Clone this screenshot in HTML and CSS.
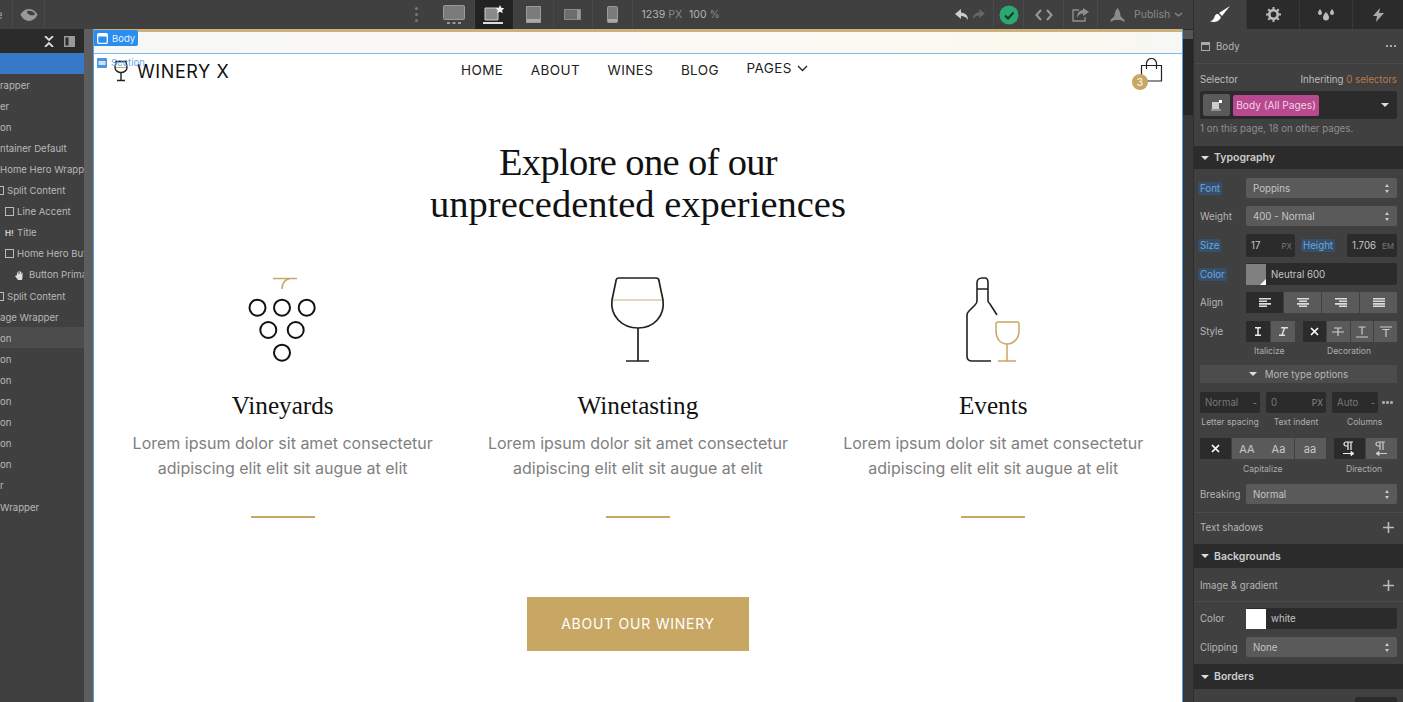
FILE: index.html
```html
<!DOCTYPE html>
<html lang="en">
<head>
<meta charset="utf-8">
<title>Designer</title>
<link rel="stylesheet" href="styles.css">
</head>
<body>
<div class="app">
  <header class="topbar">
    <div class="tool t-e"><span class="cut">e</span></div>
    <div class="tool t-eye"><svg width="18" height="14" viewBox="0 0 18 14"><path d="M9 1C4.500 1 1.500 4.500 .5 6.500 1.500 9 4.500 13 9 13s7.500-4 8.500-6.500C16.500 4.500 13.500 1 9 1z" fill="#999"/><path d="M7 3a5 4 0 0 0 8 3.500A6 5 0 0 0 7 3z" fill="#404040"/></svg></div>
    <div class="tool t-dots"><i></i><i></i><i></i></div>
    <div class="tool t-dev"><svg width="22" height="20" viewBox="0 0 22 20"><rect x=".5" y=".5" width="21" height="14" rx="1" fill="#7b7b7b" stroke="#999"/><path d="M4 18h3M9.500 18h3M15 18h3" stroke="#999" stroke-width="2"/></svg></div>
    <div class="tool t-dev active"><svg width="24" height="20" viewBox="0 0 24 20"><path d="M3 3h13v12H3z" fill="#8a8a8a" stroke="#ccc"/><path d="M1 17h20v2H1z" fill="#ddd"/><path d="M18 0l1.300 2.800 3 .4-2.200 2 .6 3-2.700-1.500-2.700 1.500.6-3-2.200-2 3-.4z" fill="#eee"/></svg></div>
    <div class="tool t-dev"><svg width="15" height="17" viewBox="0 0 15 17"><rect x=".5" y=".5" width="14" height="16" fill="#7b7b7b" stroke="#999"/><path d="M1 13h13v3H1z" fill="#aaa"/></svg></div>
    <div class="tool t-dev"><svg width="17" height="11" viewBox="0 0 17 11"><rect x=".5" y=".5" width="16" height="10" fill="#6d6d6d" stroke="#8a8a8a"/><path d="M13 1h3v9h-3z" fill="#999"/></svg></div>
    <div class="tool t-dev"><svg width="11" height="17" viewBox="0 0 11 17"><rect x=".5" y=".5" width="10" height="16" rx="1" fill="#7b7b7b" stroke="#999"/><path d="M1 13h9v3H1z" fill="#aaa"/></svg></div>
    <div class="tool t-size"><span class="lt">1239</span><span class="dm">PX</span><span class="lt gapl">100</span><span class="dm">%</span></div>
    <div class="grow"></div>
    <div class="tool t-undo">
      <svg width="14" height="12" viewBox="0 0 14 12"><path d="M6 0L0 5l6 5V7c3 0 5 1 7 4 0-5-3-7-7-7.500z" fill="#ccc"/></svg>
      <svg width="13" height="11" viewBox="0 0 14 12"><path d="M8 0l6 5-6 5V7c-3 0-5 1-7 4 0-5 3-7 7-7.500z" fill="#666"/></svg>
    </div>
    <div class="tool t-check"><svg width="20" height="20" viewBox="0 0 20 20"><circle cx="10" cy="10" r="9.500" fill="#2da771"/><path d="M6 10.500l3 3 5.500-6" fill="none" stroke="#16382a" stroke-width="2"/></svg></div>
    <div class="tool t-code"><svg width="18" height="12" viewBox="0 0 18 12"><path d="M6 1L1.500 6 6 11M12 1l4.500 5L12 11" fill="none" stroke="#999" stroke-width="2"/></svg></div>
    <div class="tool t-export"><svg width="17" height="14" viewBox="0 0 17 14"><path d="M7 2H1v11h12V9" fill="none" stroke="#8f8f8f" stroke-width="1.400"/><path d="M11 0l6 4-6 4V5.500C8 5.500 6 7 5 10c0-5 2-7.500 6-8z" fill="#8f8f8f"/></svg></div>
    <div class="tool t-publish"><svg width="15" height="14" viewBox="0 0 15 14"><path d="M7.500 0c2 2 3 5 3 8l4 4v2l-4-2h-6l-4 2v-2l4-4c0-3 1-6 3-8z" fill="#8a8a8a"/></svg><span>Publish</span><svg class="pub-chev" width="9" height="6" viewBox="0 0 9 6"><path d="M1 1l3.500 3L8 1" fill="none" stroke="#8a8a8a" stroke-width="1.300"/></svg></div>
  </header>

  <aside class="nav-tree">
    <div class="tree-head">
      <svg width="10" height="11" viewBox="0 0 10 11"><path d="M1 0l4 4 4-4M1 11l4-4 4 4" fill="none" stroke="#ddd" stroke-width="1.800"/></svg>
      <svg width="11" height="11" viewBox="0 0 11 11"><rect width="11" height="11" fill="#999"/><rect x="1.500" y="1.500" width="3" height="8" fill="#2b2b2b"/></svg>
    </div>
    <div class="tree-row selected"></div>
    <div class="tree-row">rapper</div>
    <div class="tree-row">er</div>
    <div class="tree-row">on</div>
    <div class="tree-row">ntainer Default</div>
    <div class="tree-row">Home Hero Wrapper</div>
    <div class="tree-row in-1"><i class="box cutbox"></i>Split Content</div>
    <div class="tree-row in-2"><i class="box"></i>Line Accent</div>
    <div class="tree-row in-2"><b class="hh">H!</b>Title</div>
    <div class="tree-row in-2"><i class="box"></i>Home Hero Button</div>
    <div class="tree-row in-3"><svg class="hand" width="10" height="10" viewBox="0 0 10 10"><path d="M2 5V2.500h1V4h.5V1h1v3H5V1.500h1V4h.500V2.500h1V7L7 10H3L0 6l1-.5z" fill="#ddd"/></svg>Button Primary</div>
    <div class="tree-row in-1"><i class="box cutbox"></i>Split Content</div>
    <div class="tree-row">age Wrapper</div>
    <div class="tree-row hover">on</div>
    <div class="tree-row">on</div>
    <div class="tree-row">on</div>
    <div class="tree-row">on</div>
    <div class="tree-row">on</div>
    <div class="tree-row">on</div>
    <div class="tree-row">on</div>
    <div class="tree-row">r</div>
    <div class="tree-row">Wrapper</div>
  </aside>

  <div class="gutter"></div>

  <main class="canvas">
    <div class="tag tag-body"><svg width="11" height="11" viewBox="0 0 11 11"><rect x=".7" y=".7" width="9.600" height="9.600" rx="1" fill="none" stroke="#fff" stroke-width="1.300"/><path d="M1 1h9v2.500H1z" fill="#fff"/></svg>Body</div>
    <div class="tag-section"><svg width="10" height="10" viewBox="0 0 10 10"><rect width="10" height="10" rx="1" fill="#4a94e0"/><path d="M1.500 3h7v4h-7z" fill="#cfe3f7"/></svg>Section</div>
    <div class="strip"></div>
    <div class="page">
      <nav class="site-nav">
        <div class="logo">
          <svg width="16" height="22" viewBox="0 0 16 22"><path d="M3 7.500h10" stroke="#c8a765" stroke-width="1"/><path d="M3 1.500h10l1 6c0 3-3 5-6 5s-6-2-6-5z" fill="none" stroke="#222" stroke-width="1.400"/><path d="M8 12.500V20.500M4 20.500h8" stroke="#222" stroke-width="1.400"/></svg>
          <span>WINERY X</span>
        </div>
        <ul class="menu">
          <li>HOME</li><li>ABOUT</li><li>WINES</li><li>BLOG</li>
          <li class="pages">PAGES<svg width="11" height="7" viewBox="0 0 11 7"><path d="M1 1l4.500 4.500L10 1" fill="none" stroke="#222" stroke-width="1.300"/></svg></li>
        </ul>
        <div class="cart">
          <svg width="23" height="25" viewBox="0 0 23 25"><path d="M1.500 7.500h20v15.500h-20z" fill="none" stroke="#222" stroke-width="1.200"/><path d="M6.500 11V5.500a5 5 0 0 1 10 0V11" fill="none" stroke="#222" stroke-width="1.200"/></svg>
          <span class="badge">3</span>
        </div>
      </nav>
      <h1><span class="tight">Explore one of our</span><br>unprecedented experiences</h1>
      <section class="cols">
        <article class="col">
          <svg class="pic" width="70" height="85" viewBox="0 0 70 85"><path d="M25 1.500h24M42 1.500c-5 1-8 5-8 10.500" fill="none" stroke="#c8a765" stroke-width="1.600"/><g fill="none" stroke="#111" stroke-width="2"><circle cx="9.500" cy="30.700" r="8"/><circle cx="34" cy="30.700" r="8"/><circle cx="58.700" cy="30.700" r="8"/><circle cx="20.300" cy="53" r="8"/><circle cx="47.700" cy="53" r="8"/><circle cx="34" cy="75.700" r="8"/></g></svg>
          <h2>Vineyards</h2>
          <p>Lorem ipsum dolor sit amet consectetur adipiscing elit elit sit augue at elit</p>
          <hr>
        </article>
        <article class="col">
          <svg class="pic" width="70" height="85" viewBox="0 0 70 85"><path d="M10 23h49" stroke="#d8c9a5" stroke-width="1.600"/><path d="M13 4c0-2 1-3 3-3h37c2 0 3 1 3 3l4 19c2 16-9 28-25 28S7 39 9 23z" fill="none" stroke="#222" stroke-width="1.700"/><path d="M35 51v33M23 84h23" fill="none" stroke="#222" stroke-width="1.700"/></svg>
          <h2>Winetasting</h2>
          <p>Lorem ipsum dolor sit amet consectetur adipiscing elit elit sit augue at elit</p>
          <hr>
        </article>
        <article class="col">
          <svg class="pic" width="70" height="85" viewBox="0 0 70 85"><path d="M33 84H14c-3 0-5-2-5-5V38c0-2 1-3 2-4l6-6c1-1 2-2 2-4V6c0-3 2-5 5-5h3c2 0 3 2 3 5v18c0 1 1 2 2 3l7 11M19 12h11" fill="none" stroke="#222" stroke-width="1.600"/><path d="M40 45h19c1 0 2 1 2 2v7c0 7-5 13-12 13s-11-6-11-13v-7c0-1 1-2 2-2zM49 67v17M40 84h18" fill="none" stroke="#c8a765" stroke-width="1.500"/></svg>
          <h2>Events</h2>
          <p>Lorem ipsum dolor sit amet consectetur adipiscing elit elit sit augue at elit</p>
          <hr>
        </article>
      </section>
      <a class="cta">ABOUT OUR WINERY</a>
    </div>
  </main>

  <div class="scroll"><i class="arrow"></i><i class="track"></i><i class="thumb"></i></div>

  <aside class="panel">
    <div class="tabs">
      <div class="tab on"><svg width="21" height="17" viewBox="0 0 21 17"><path d="M20 0L9 7l3 3zM8 8c-3 0-3 2-4 4-1 2-2 3-4 3 3 2 8 1 10-2 1-1 1-2 0-3z" fill="#fff"/></svg></div>
      <div class="tab"><svg width="15" height="15" viewBox="0 0 15 15"><circle cx="7.500" cy="7.500" r="4.200" fill="none" stroke="#bbb" stroke-width="2.600"/><path d="M7.500 0v15M0 7.500h15M2.200 2.200l10.600 10.600M12.800 2.200L2.200 12.800" stroke="#bbb" stroke-width="2" stroke-dasharray="3 9 3 0"/></svg></div>
      <div class="tab"><svg width="18" height="13" viewBox="0 0 18 13"><path d="M3 1c1.500 2 2 3 2 4a2 2 0 0 1-4 0c0-1 .5-2 2-4zM15 1c1.500 2 2 3 2 4a2 2 0 0 1-4 0c0-1 .5-2 2-4zM9 4c2 2 3 4 3 5.500a3 3 0 0 1-6 0C6 8 7 6 9 4z" fill="#bbb"/></svg></div>
      <div class="tab"><svg width="11" height="14" viewBox="0 0 11 14"><path d="M7 0L0 8h4l-1 6 8-9H6z" fill="#aaa"/></svg></div>
    </div>

    <div class="p-head"><svg width="9" height="9" viewBox="0 0 9 9"><rect x=".5" y=".5" width="8" height="8" fill="none" stroke="#aaa"/><path d="M1 1h7v2H1z" fill="#aaa"/></svg><span class="grow">Body</span><span class="more"><i></i><i></i><i></i></span></div>

    <div class="p-sel">
      <div class="sel-top"><span>Selector</span><span>Inheriting <em>0 selectors</em></span></div>
      <div class="sel-box">
        <span class="sel-ico"><svg width="11" height="11" viewBox="0 0 11 11"><path d="M1 2h7v7H1zM0 9.500h10v1H0z" fill="#ccc"/><rect x="8" y="0" width="3" height="3" fill="#fff"/></svg></span>
        <span class="pill">Body (All Pages)</span>
        <span class="grow"></span>
        <i class="caret"></i>
      </div>
      <div class="sel-note">1 on this page, 18 on other pages.</div>
    </div>

    <h3 class="sec sec-typo"><i class="caret small"></i>Typography</h3>
    <div class="form">
      <div class="row r-font"><label><span class="hl">Font</span></label><div class="select">Poppins<i class="updown"></i></div></div>
      <div class="row r-weight"><label>Weight</label><div class="select">400 - Normal<i class="updown"></i></div></div>
      <div class="row r-size">
        <label><span class="hl">Size</span></label>
        <div class="input w49"><span>17</span><small>PX</small></div>
        <label class="h2l"><span class="hl">Height</span></label>
        <div class="input w49b"><span>1.706</span><small>EM</small></div>
      </div>
      <div class="row r-color"><label><span class="hl">Color</span></label><div class="color"><i class="swatch grey"></i>Neutral 600</div></div>
      <div class="row r-align"><label>Align</label>
        <div class="seg four">
          <b class="dark"><svg width="12" height="9" viewBox="0 0 12 9"><path d="M0 .7h12M0 3.300h8M0 5.900h12M0 8.300h8" stroke="#ddd" stroke-width="1.600"/></svg></b>
          <b><svg width="12" height="9" viewBox="0 0 12 9"><path d="M0 .7h12M2 3.300h8M0 5.900h12M2 8.300h8" stroke="#ddd" stroke-width="1.600"/></svg></b>
          <b><svg width="12" height="9" viewBox="0 0 12 9"><path d="M0 .7h12M4 3.300h8M0 5.900h12M4 8.300h8" stroke="#ddd" stroke-width="1.600"/></svg></b>
          <b><svg width="12" height="9" viewBox="0 0 12 9"><path d="M0 .7h12M0 3.300h12M0 5.900h12M0 8.300h12" stroke="#ddd" stroke-width="1.600"/></svg></b>
        </div>
      </div>
      <div class="row r-style"><label>Style</label>
        <div class="seg two">
          <b class="dark"><svg width="8" height="9" viewBox="0 0 8 9"><path d="M1 .8h6M1 8.200h6M4 1v7" stroke="#eee" stroke-width="1.500"/></svg></b>
          <b><svg width="9" height="9" viewBox="0 0 9 9"><path d="M2 .8h7M0 8.200h6M5.500 1L3 8" stroke="#ddd" stroke-width="1.500"/></svg></b>
        </div>
        <div class="seg deco">
          <b class="dark"><svg width="9" height="9" viewBox="0 0 9 9"><path d="M1 1l7 7M8 1L1 8" stroke="#fff" stroke-width="1.700"/></svg></b>
          <b><svg width="12" height="10" viewBox="0 0 12 10"><path d="M2 1h8M6 1v8M0 5h12" stroke="#ccc" stroke-width="1.200"/></svg></b>
          <b><svg width="12" height="12" viewBox="0 0 12 12"><path d="M2.500 1h7M6 1v7.500M0 11h12" stroke="#ccc" stroke-width="1.200"/></svg></b>
          <b><svg width="12" height="12" viewBox="0 0 12 12"><path d="M0 1h12M2.500 3.500h7M6 3.500V11" stroke="#ccc" stroke-width="1.200"/></svg></b>
        </div>
      </div>
      <div class="caps c-style"><span class="c1">Italicize</span><span class="c2">Decoration</span></div>
      <div class="more-opts"><i class="caret small"></i>More type options</div>
      <div class="trio">
        <div class="cell"><div class="input ghost w60"><span>Normal</span><small>-</small></div><span class="cap">Letter spacing</span></div>
        <div class="cell"><div class="input ghost w60"><span>0</span><small>PX</small></div><span class="cap">Text indent</span></div>
        <div class="cell cell-c"><div class="columns"><div class="input ghost w46"><span>Auto</span><small>-</small></div><span class="more dim"><i></i><i></i><i></i></span></div><span class="cap">Columns</span></div>
      </div>
      <div class="row r-cap">
        <div class="seg capz">
          <b class="dark"><svg width="9" height="9" viewBox="0 0 9 9"><path d="M1 1l7 7M8 1L1 8" stroke="#fff" stroke-width="1.700"/></svg></b>
          <b>AA</b><b>Aa</b><b>aa</b>
        </div>
        <div class="seg dirn">
          <b class="dark"><svg width="12" height="15" viewBox="0 0 12 15"><path d="M5 1v8M8 1v8M3 1h7M3 1a2 2 0 0 0 0 4h2" fill="none" stroke="#eee" stroke-width="1.200"/><path d="M0 12.500h10M8 10.500l3 2-3 2z" fill="#eee" stroke="#eee"/></svg></b>
          <b><svg width="12" height="15" viewBox="0 0 12 15"><path d="M5 1v8M8 1v8M3 1h7M3 1a2 2 0 0 0 0 4h2" fill="none" stroke="#ccc" stroke-width="1.200"/><path d="M2 12.500h10M4 10.500l-3 2 3 2z" fill="#ccc" stroke="#ccc"/></svg></b>
        </div>
      </div>
      <div class="caps c-cap"><span class="c3">Capitalize</span><span class="c4">Direction</span></div>
      <div class="row r-break"><label>Breaking</label><div class="select">Normal<i class="updown"></i></div></div>
    </div>
    <div class="line-row shadows"><span class="grow">Text shadows</span><svg width="11" height="11" viewBox="0 0 11 11"><path d="M5.500 0v11M0 5.500h11" stroke="#bbb" stroke-width="1.600"/></svg></div>

    <h3 class="sec sec-bg"><i class="caret small"></i>Backgrounds</h3>
    <div class="line-row image"><span class="grow">Image &amp; gradient</span><svg width="11" height="11" viewBox="0 0 11 11"><path d="M5.500 0v11M0 5.500h11" stroke="#bbb" stroke-width="1.600"/></svg></div>
    <div class="form form-bg">
      <div class="row r-bgc"><label>Color</label><div class="color"><i class="swatch white"></i>white</div></div>
      <div class="row r-clip"><label>Clipping</label><div class="select">None<i class="updown"></i></div></div>
    </div>
    <h3 class="sec sec-bd"><i class="caret small"></i>Borders</h3>
    <div class="stub"></div>
  </aside>
</div>
</body>
</html>
```
FILE: styles.css
```css
* { box-sizing: border-box; }
html, body { margin: 0; padding: 0; height: 100%; overflow: hidden; background: #404040; }
body { font-family: Inter, "Liberation Sans", sans-serif; font-size: 9.700px; color: #bdbdbd; }
i, b { display: block; font-style: normal; font-weight: normal; }
.grow { flex: 1; }

.app { width: 1403px; height: 702px; overflow: hidden; display: grid; grid-template-columns: 84px 9px 1090px 10px 210px; grid-template-rows: 29px 673px; }

.topbar { grid-column: 1 / 5; grid-row: 1; display: flex; align-items: center; background: #404040; height: 29px; }
.tool { height: 29px; display: flex; align-items: center; justify-content: center; flex: none; border-right: 1px solid #4a4a4a; }
.t-e { width: 13px; justify-content: flex-start; }
.cut { color: #aaa; font-size: 11px; margin-left: -4px; }
.t-eye { width: 32px; }
.t-dots { width: 29px; flex-direction: column; gap: 3px; border-right: 0; margin-left: 361px; padding-right: 8px; }
.t-dots i { width: 3px; height: 3px; border-radius: 50%; background: #777; }
.t-dev { width: 39.500px; border-right: 1px solid #484848; }
.t-dev.active { background: #222; }
.t-size { width: 93px; justify-content: flex-start; padding-left: 9px; font-size: 10.500px; gap: 3px; border-right: 0; }
.lt { color: #b4b4b4; }
.dm { color: #8a8a8a; }
.gapl { margin-left: 4px; }
.t-undo { width: 48px; gap: 3px; }
.t-check { width: 30px; }
.t-code { width: 40px; }
.t-export { width: 34px; }
.t-publish { width: 95px; gap: 9px; border-right: 0; justify-content: flex-start; padding-left: 12px; color: #8a8a8a; font-size: 10.500px; }
.pub-chev { margin-left: -5px; }

.nav-tree { background: #404040; overflow: hidden; }
.tree-head { height: 24px; background: #2b2b2b; display: flex; align-items: center; justify-content: flex-end; gap: 10px; padding-right: 9px; }
.tree-row { height: 21.100px; padding-top: 1px; white-space: nowrap; overflow: hidden; font-size: 9.600px; color: #b8b8b8; display: flex; align-items: center; }
.selected { background: #3878c8; }
.hover { background: #4c4c4c; }
.box { width: 9px; height: 9px; border: 1px solid #bbb; margin-right: 3px; flex: none; }
.cutbox { margin-left: -5px; }
.in-2 { padding-left: 5px; }
.in-3 { padding-left: 15px; }
.hh { width: 9px; margin-right: 3px; font-size: 8px; font-weight: 700; color: #ccc; }
.hand { margin-right: 4px; flex: none; }

.gutter { background: #5e5e5e; }

.canvas { position: relative; overflow: hidden; background: #fff; border-left: 1px solid #5a9fe0; border-right: 1px solid #5a9fe0; }
.tag-body { position: absolute; left: -1px; top: 1px; width: 45px; height: 16px; background: #2a8df0; color: #e8f3fe; border-radius: 2px; display: flex; align-items: center; gap: 4px; padding-left: 4px; font-size: 9.500px; z-index: 3; }
.tag-section { position: absolute; left: 3px; top: 28px; display: flex; align-items: center; gap: 4px; color: #6aa8e6; font-size: 9.500px; z-index: 3; }
.strip { height: 25px; background: linear-gradient(90deg, #f7f7f6, #f9f8f5 30%, #fbf9f4 60%, #fbf9ee 85%, #f7f7f4); border-top: 3px solid #cdb07a; border-bottom: 1px solid #7fbbe8; }
.page { color: #111; }

.site-nav { height: 42px; display: flex; align-items: flex-start; position: relative; padding-left: 19px; }
.logo { display: flex; align-items: center; gap: 8px; height: 22px; margin-top: 6px; font-size: 18px; letter-spacing: .6px; color: #111; width: 348px; }
.logo svg { flex: none; }
.menu { display: flex; align-items: flex-start; list-style: none; margin: 7px 0 0; padding: 0; font-size: 13.500px; letter-spacing: .4px; color: #222; gap: 27.500px; font-weight: 400; }
.menu li { line-height: 18px; }
.pages { display: flex; align-items: center; gap: 5px; margin-top: -2px; }
.cart { position: absolute; left: 1046px; top: 4px; }
.badge { position: absolute; left: -8px; top: 16px; width: 16px; height: 16px; border-radius: 50%; background: #c8a765; color: #f4ecd9; font-size: 10px; font-weight: 600; text-align: center; line-height: 16px; }

h1 { margin: 45px 0 0; font-family: "Liberation Serif", serif; font-weight: 400; font-size: 38.500px; line-height: 42px; text-align: center; color: #111; }
.tight { letter-spacing: -.65px; }
.cols { display: grid; grid-template-columns: repeat(3, 355.300px); margin: 52px 0 0 11px; }
.col { display: flex; flex-direction: column; align-items: center; text-align: center; }
.pic { display: block; }
h2 { margin: 29px 0 0; font-family: "Liberation Serif", serif; font-weight: 400; font-size: 25.200px; line-height: 30px; color: #111; }
.col p { margin: 10px 0 0; width: 320px; font-size: 16px; line-height: 25px; color: #808080; }
hr { width: 64px; height: 2px; border: 0; background: #c8a765; margin: 35px 0 0; }
.cta { display: flex; align-items: center; justify-content: center; width: 222px; height: 54px; padding-bottom: 2px; margin: 79px 0 0 433px; background: #c8a765; color: #fff; font-size: 14px; letter-spacing: .75px; }

.scroll { background: #2b2b2b; display: flex; flex-direction: column; }
.arrow { height: 9px; background: #555; margin-top: 1px; }
.track { height: 76px; background: #262626; }
.thumb { flex: 1; background: #383838; }

.panel { grid-column: 5; grid-row: 1 / 3; background: #404040; height: 702px; overflow: hidden; border-left: 1px solid #2f2f2f; }
.tabs { display: grid; grid-template-columns: 52px 53px 53px 1fr; height: 29px; background: #2b2b2b; }
.tab { display: flex; align-items: center; justify-content: center; border-left: 1px solid #383838; }
.tab.on { background: #404040; border-left: 0; }
.p-head { height: 35px; display: flex; align-items: center; gap: 6px; padding: 0 7px; border-bottom: 1px solid #4b4b4b; color: #b5b5b5; }
.more { display: flex; gap: 1.500px; }
.more i { width: 2.500px; height: 2.500px; border-radius: 50%; background: #ccc; }
.more.dim i { background: #aaa; }
.p-sel { padding: 0 6px; height: 82px; }
.sel-top { display: flex; justify-content: space-between; padding-top: 9px; height: 27px; line-height: 13px; }
.sel-top em { font-style: normal; color: #b9794a; }
.sel-box { height: 28px; background: #2b2b2b; border-radius: 2px; display: flex; align-items: center; padding: 3px; gap: 3px; }
.sel-ico { width: 27px; height: 22px; background: #5a5a5a; border-radius: 2px; display: flex; align-items: center; justify-content: center; }
.pill { height: 21px; width: 86px; background: #b8498f; color: #f0d4e6; border-radius: 2px; font-size: 10.200px; line-height: 21px; text-align: center; white-space: nowrap; }
.caret { width: 0; height: 0; border-left: 4px solid transparent; border-right: 4px solid transparent; border-top: 4px solid #ddd; margin-right: 5px; }
.caret.small { border-width: 4px 4px 0; border-top-color: #ddd; margin-right: 0; flex: none; }
.sel-note { padding-top: 3px; color: #8e8e8e; font-size: 9.700px; line-height: 13px; }

.sec { margin: 0; display: flex; align-items: center; gap: 5px; background: #2b2b2b; padding-left: 7px; font-size: 10.500px; font-weight: 600; color: #cdcdcd; }
.sec-typo { height: 23px; }
.sec-bg { height: 24px; }
.sec-bd { height: 25px; }

.form { padding: 9px 6px 0; }
.row { display: flex; align-items: center; }
.row label { width: 46px; flex: none; color: #b5b5b5; }
.hl { color: #6ea7dc; background: #36506c; border-radius: 2px; padding: 1px 2px; margin-left: -2px; }
.r-font, .r-weight { height: 20px; margin-bottom: 8px; }
.select { flex: 1; height: 20px; background: #5a5a5a; border-radius: 2px; display: flex; align-items: center; justify-content: space-between; padding: 0 7px; color: #c4c4c4; }
.updown { width: 5px; height: 9px; position: relative; }
.updown::before, .updown::after { content: ""; position: absolute; left: 0; border-left: 2.500px solid transparent; border-right: 2.500px solid transparent; }
.updown::before { top: 0; border-bottom: 3px solid #ccc; }
.updown::after { bottom: 0; border-top: 3px solid #ccc; }
.r-size { height: 23px; margin-bottom: 6px; }
.input { height: 23px; background: #2b2b2b; border-radius: 2px; display: flex; align-items: center; justify-content: space-between; padding: 0 3px 0 5px; color: #c8c8c8; flex: none; }
.input small { font-size: 8px; color: #777; }
.w49 { width: 49px; }
.row .h2l { width: 32px; margin: 0 12px 0 8px; }
.w49b { width: 50px; }
.r-color { height: 22px; margin-bottom: 7px; }
.color { flex: 1; height: 22px; background: #2b2b2b; border-radius: 2px; display: flex; align-items: center; gap: 5px; color: #c4c4c4; }
.swatch { width: 20px; height: 21px; flex: none; position: relative; }
.swatch.grey { background: #808080; }
.swatch.grey::after { content: ""; position: absolute; right: 0; bottom: 0; border-left: 6px solid transparent; border-bottom: 6px solid #fff; }
.swatch.white { background: #fff; }
.r-align { height: 21px; margin-bottom: 8px; }
.seg { display: flex; gap: 1px; height: 21px; }
.seg b { background: #5a5a5a; display: flex; align-items: center; justify-content: center; height: 100%; }
.seg b.dark { background: #2b2b2b; }
.four { flex: 1; }
.four b { flex: 1; }
.two b { width: 24px; }
.r-style { height: 21px; }
.deco { margin-left: 8px; }
.deco b { width: 22.750px; }
.caps { height: 12px; margin-top: 4px; font-size: 8.500px; color: #aeaeae; display: flex; }
.c1 { margin-left: 54px; width: 73px; }
.more-opts { height: 18px; margin-top: 7px; background: #4c4c4c; display: flex; align-items: center; justify-content: center; gap: 8px; color: #b5b5b5; border-radius: 1px; }
.trio { display: flex; margin-top: 9px; gap: 6px; }
.cell { display: flex; flex-direction: column; align-items: center; gap: 4px; }
.cell .cap { font-size: 8.500px; color: #aeaeae; line-height: 11px; }
.ghost { height: 21px; color: #777; }
.ghost small { color: #888; font-size: 8.500px; }
.w60 { width: 60px; }
.w46 { width: 46px; }
.columns { display: flex; align-items: center; gap: 4px; }
.cell-c { align-items: flex-start; }
.cell-c .cap { margin-left: 15px; }
.r-cap { height: 21px; margin-top: 10px; }
.capz b { width: 31px; color: #c8c8c8; font-size: 11px; }
.capz { gap: 0.500px; }
.dirn { margin-left: 8px; }
.dirn b { width: 31px; }
.c3 { margin-left: 43px; width: 103px; }
.c-cap { margin-top: 5px; }
.r-break { height: 20px; margin-top: 8px; }
.line-row { display: flex; align-items: center; padding: 0 9px 0 6px; color: #b5b5b5; }
.shadows { height: 32px; margin-top: 8px; padding-bottom: 2px; border-top: 1px solid #4b4b4b; }
.image { height: 34px; padding-top: 1px; border-bottom: 1px solid #4b4b4b; }
.form-bg { padding-top: 6px; height: 62px; }
.r-bgc { height: 21px; margin-bottom: 8px; }
.r-bgc .color { height: 21px; }
.r-bgc .swatch { height: 20px; }
.r-clip { height: 20px; }
.stub { width: 42px; height: 10px; background: #2b2b2b; margin: 8px 0 0 161px; border-radius: 2px; }
```
